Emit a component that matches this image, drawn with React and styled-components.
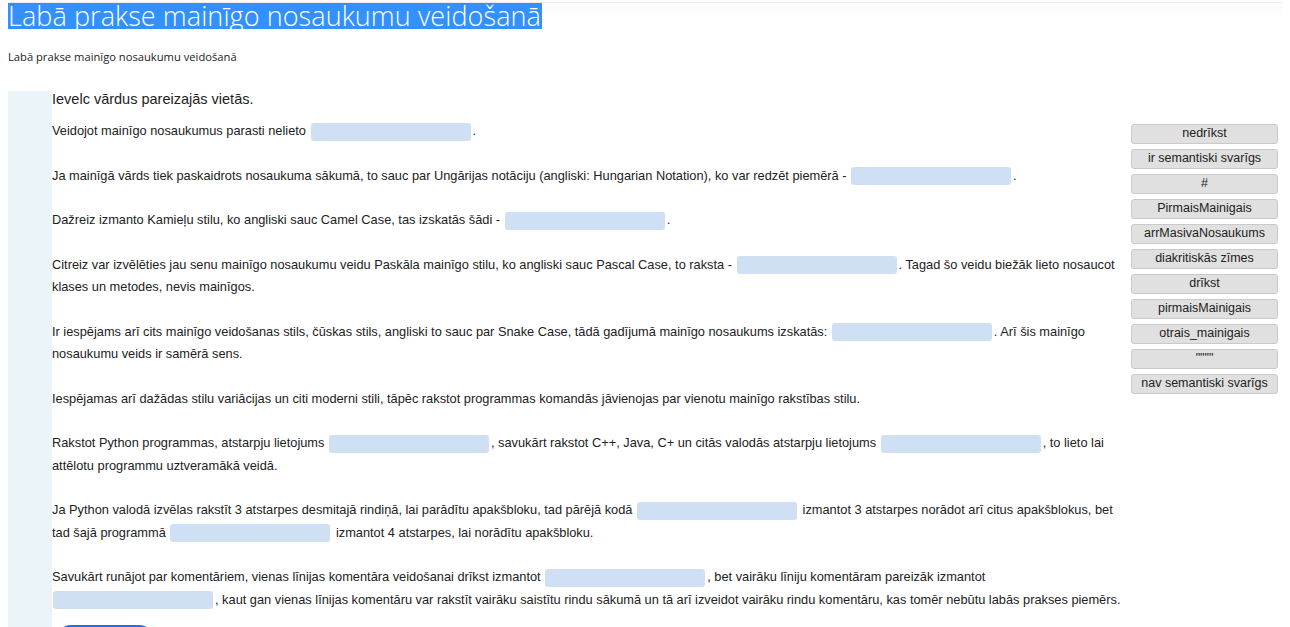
import React from "react";
import styled, { createGlobalStyle } from "styled-components";

const GlobalStyle = createGlobalStyle`
  body {
    margin: 0 8px;
    background: #fff;
    font-family: "Liberation Sans", Arial, sans-serif;
    color: #222;
  }
`;

const TopBar = styled.div`
  height: 3px;
  margin: 0 -8px;
  box-shadow: 0 3px 14px rgba(0, 0, 0, 0.08);
  border-bottom: 1px solid #ebebeb;
  box-sizing: border-box;
`;

const Title = styled.h1`
  position: relative;
  margin: 0;
  font-family: "Open Sans", "Noto Sans", sans-serif;
  font-weight: 300;
  font-size: 27px;
  line-height: 26px;
`;

const Selected = styled.span`
  display: inline-block;
  height: 26px;
  background: #3390ff;
  color: #fff;
  letter-spacing: 0.08px;
  padding-right: 1px;
`;

const Subtitle = styled.div`
  margin-top: 20px;
  font-family: "Open Sans", "Noto Sans", sans-serif;
  font-size: 11.2px;
  line-height: 16px;
  color: #222;
`;

const Workspace = styled.div`
  display: flex;
  margin-top: 26px;
  min-height: 560px;
`;

const Gutter = styled.div`
  width: 44px;
  flex-shrink: 0;
  background: #ebf4f8;
`;

const Content = styled.div`
  flex: 1;
  padding-right: 10px;
`;

const Heading = styled.div`
  font-size: 14.5px;
  line-height: 16px;
  margin-bottom: 13px;
`;

const Para = styled.p`
  margin: 0 0 22px;
  font-size: 12.8px;
  line-height: 22.5px;

  &:last-of-type {
    margin-bottom: 14px;
  }
`;

const Blank = styled.span`
  display: inline-block;
  width: 160px;
  height: 18px;
  margin: 0 2px 0 1px;
  vertical-align: middle;
  border-radius: 3px;
  background: #cfe0f5;
`;

const Words = styled.div`
  width: 147px;
  flex-shrink: 0;
  margin-right: 4px;
  padding-top: 33px;
  display: flex;
  flex-direction: column;
  gap: 5px;
`;

const Word = styled.div`
  height: 20px;
  box-sizing: border-box;
  border: 1px solid #cacaca;
  border-radius: 3px;
  background: #e0e0e0;
  font-size: 12.5px;
  line-height: 17px;
  text-align: center;
  color: #222;
`;

const CheckButton = styled.button`
  display: block;
  width: 100px;
  height: 34px;
  margin-left: 3px;
  border: 0;
  border-radius: 16px;
  background: #1a73e8;
`;

const words = [
  "nedrīkst",
  "ir semantiski svarīgs",
  "#",
  "PirmaisMainigais",
  "arrMasivaNosaukums",
  "diakritiskās zīmes",
  "drīkst",
  "pirmaisMainigais",
  "otrais_mainigais",
  '""""',
  "nav semantiski svarīgs",
];

const App = () => {
  return (
    <>
      <GlobalStyle />
      <TopBar />
      <Title>
        <Selected>Labā prakse mainīgo nosaukumu veidošanā</Selected>
      </Title>
      <Subtitle>Labā prakse mainīgo nosaukumu veidošanā</Subtitle>
      <Workspace>
        <Gutter />
        <Content>
          <Heading>Ievelc vārdus pareizajās vietās.</Heading>
          <Para>
            Veidojot mainīgo nosaukumus parasti nelieto <Blank />.
          </Para>
          <Para>
            Ja mainīgā vārds tiek paskaidrots nosaukuma sākumā, to sauc par Ungārijas notāciju (angliski: Hungarian
            Notation), ko var redzēt piemērā - <Blank />.
          </Para>
          <Para>
            Dažreiz izmanto Kamieļu stilu, ko angliski sauc Camel Case, tas izskatās šādi - <Blank />.
          </Para>
          <Para>
            Citreiz var izvēlēties jau senu mainīgo nosaukumu veidu Paskāla mainīgo stilu, ko angliski sauc Pascal
            Case, to raksta - <Blank />. Tagad šo veidu biežāk lieto nosaucot klases un metodes, nevis mainīgos.
          </Para>
          <Para>
            Ir iespējams arī cits mainīgo veidošanas stils, čūskas stils, angliski to sauc par Snake Case, tādā
            gadījumā mainīgo nosaukums izskatās: <Blank />. Arī šis mainīgo nosaukumu veids ir samērā sens.
          </Para>
          <Para>
            Iespējamas arī dažādas stilu variācijas un citi moderni stili, tāpēc rakstot programmas komandās
            jāvienojas par vienotu mainīgo rakstības stilu.
          </Para>
          <Para>
            Rakstot Python programmas, atstarpju lietojums <Blank />, savukārt rakstot C++, Java, C+ un citās
            valodās atstarpju lietojums <Blank />, to lieto lai attēlotu programmu uztveramākā veidā.
          </Para>
          <Para>
            Ja Python valodā izvēlas rakstīt 3 atstarpes desmitajā rindiņā, lai parādītu apakšbloku, tad pārējā
            kodā <Blank /> izmantot 3 atstarpes norādot arī citus apakšblokus, bet tad šajā programmā <Blank />{" "}
            izmantot 4 atstarpes, lai norādītu apakšbloku.
          </Para>
          <Para>
            Savukārt runājot par komentāriem, vienas līnijas komentāra veidošanai drīkst izmantot <Blank />, bet
            vairāku līniju komentāram pareizāk izmantot <Blank />, kaut gan vienas līnijas komentāru var rakstīt
            vairāku saistītu rindu sākumā un tā arī izveidot vairāku rindu komentāru, kas tomēr nebūtu labās prakses
            piemērs.
          </Para>
          <CheckButton />
        </Content>
        <Words>
          {words.map((w) => (
            <Word key={w}>{w}</Word>
          ))}
        </Words>
      </Workspace>
    </>
  );
};

export default App;
